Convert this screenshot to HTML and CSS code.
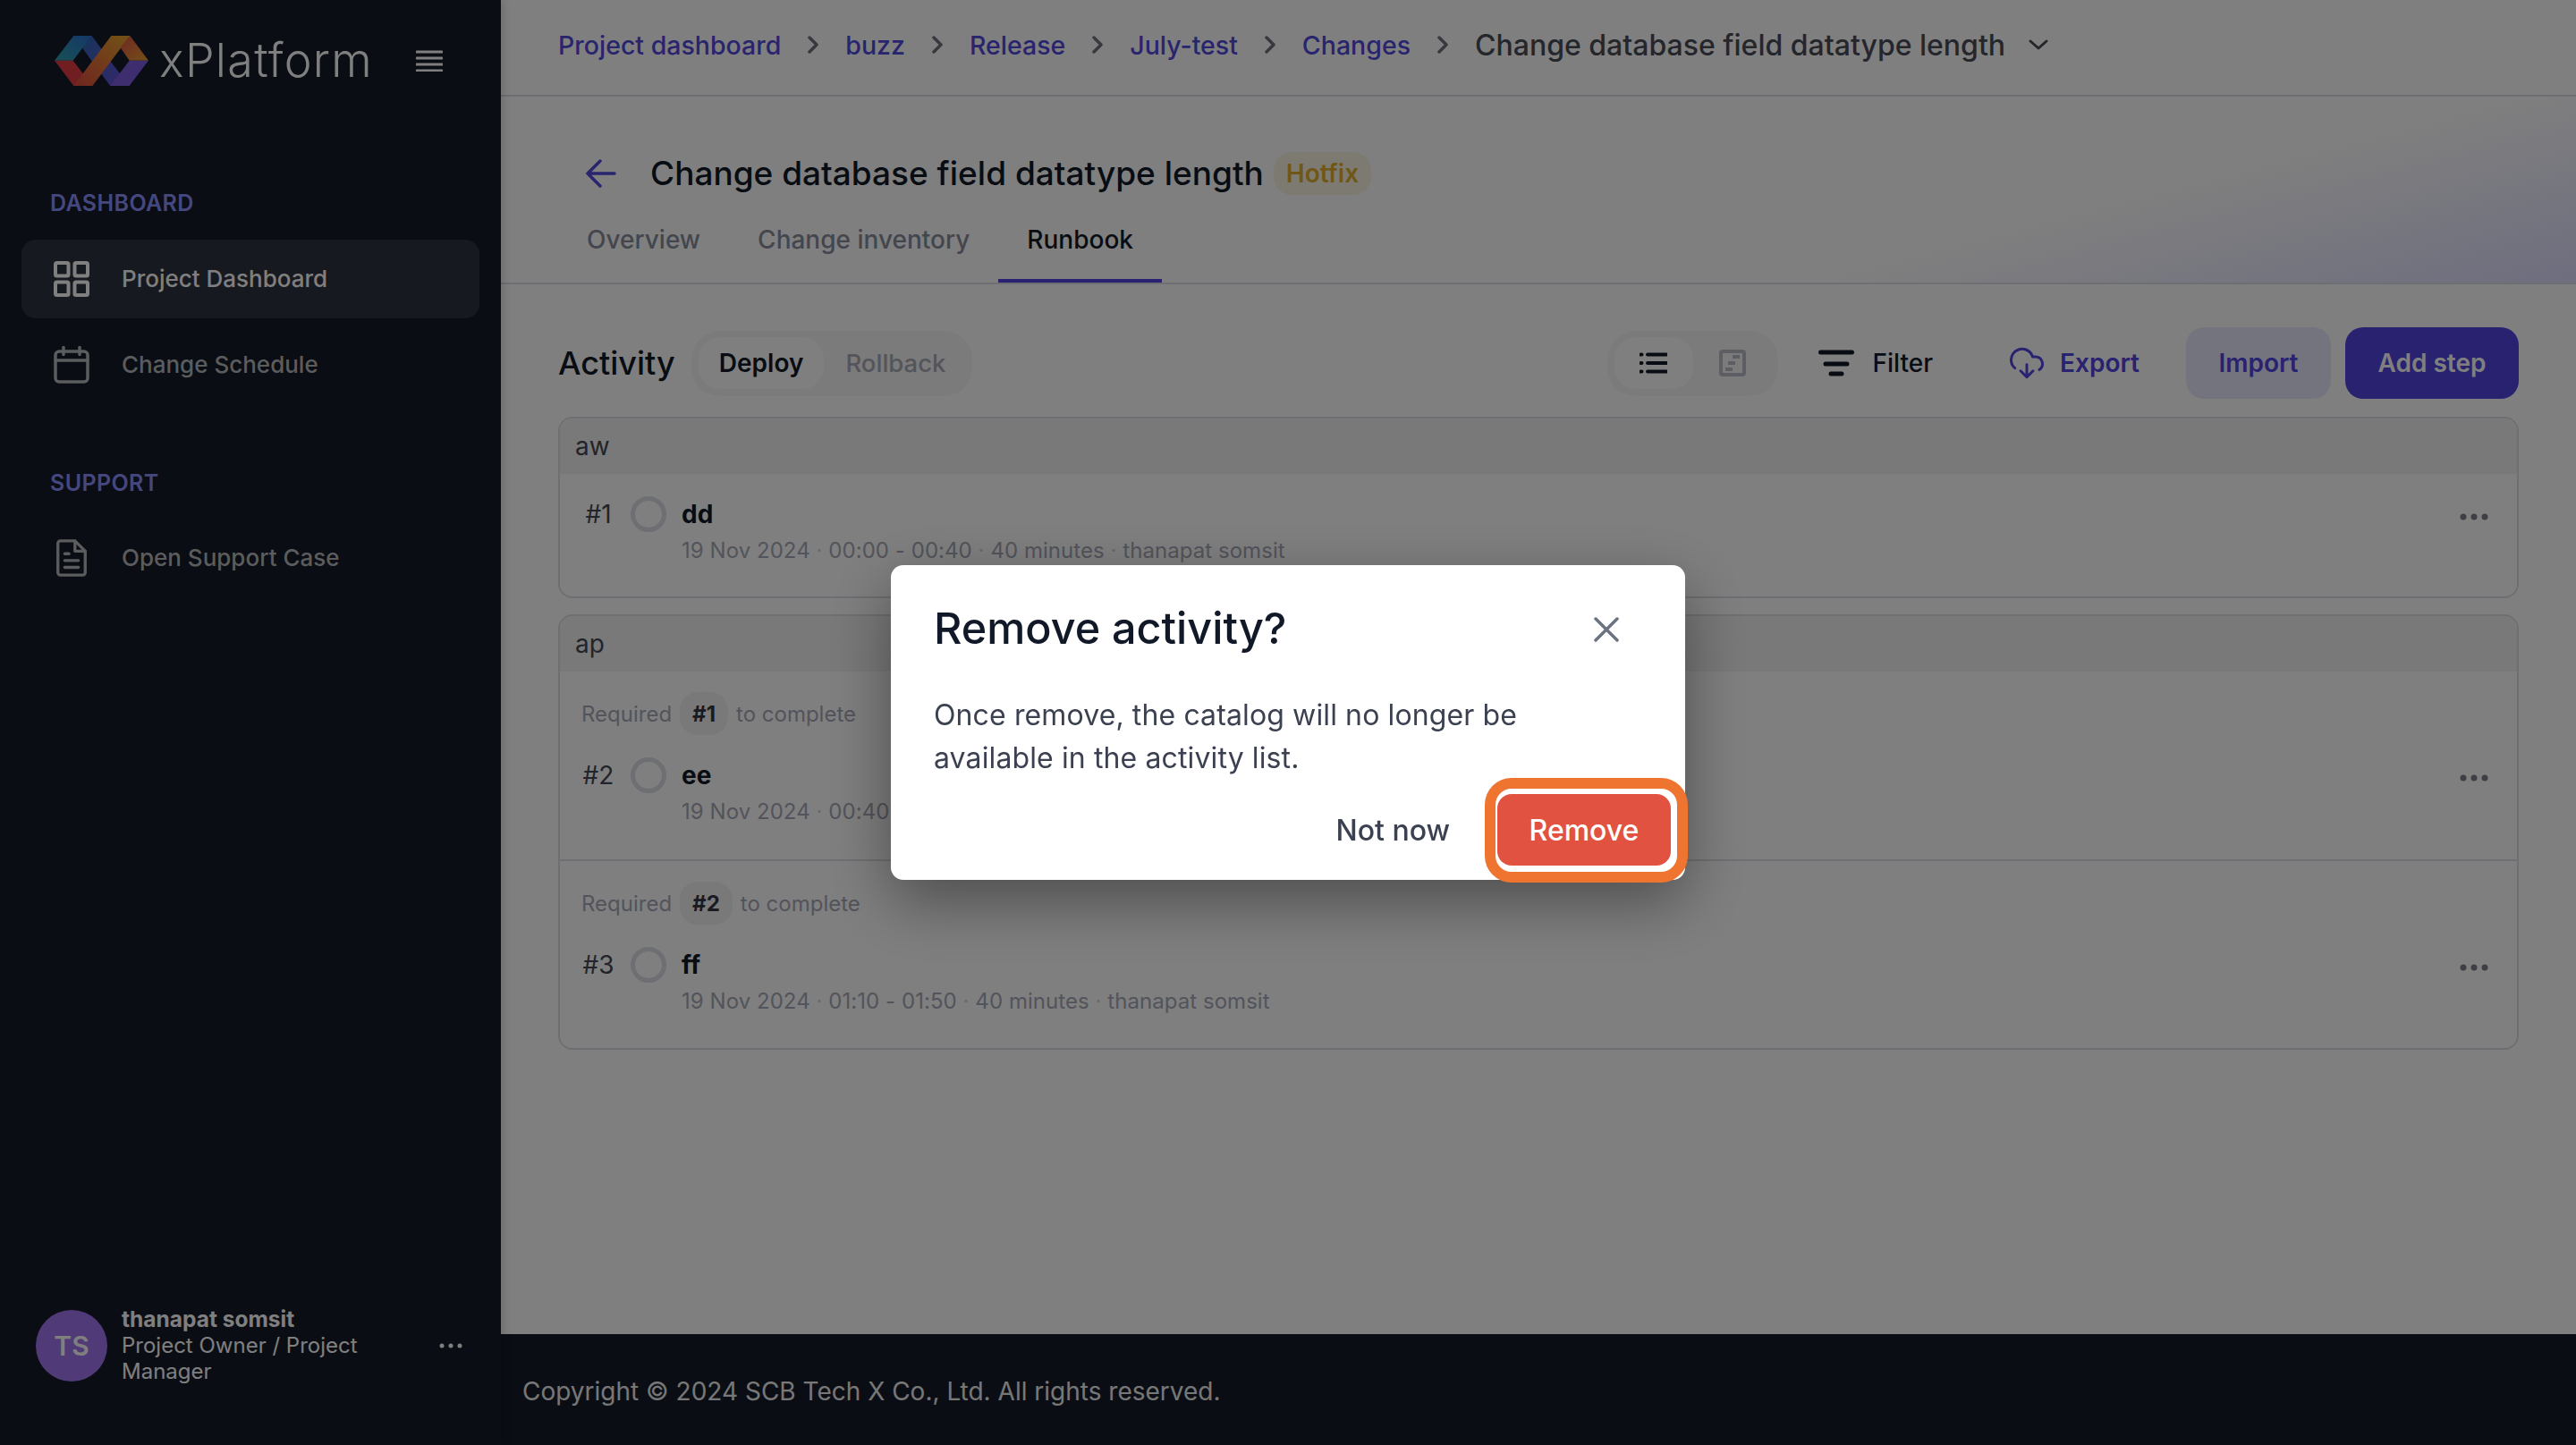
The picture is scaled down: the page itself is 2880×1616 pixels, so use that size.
FILE: index.html
```html
<!DOCTYPE html>
<html lang="en">
<head>
<meta charset="utf-8">
<title>Runbook</title>
<link rel="stylesheet" href="styles.css">
</head>
<body>
<div class="app">
  <aside class="sidebar">
    <div class="brand">
      <svg class="logo" viewBox="159 120 275 168" preserveAspectRatio="none">
        <defs>
          <linearGradient id="lb" x1="0" y1="1" x2="1" y2="0"><stop offset="0" stop-color="#2fa3ad"/><stop offset="1" stop-color="#2b6fd0"/></linearGradient>
          <linearGradient id="lm" x1="0" y1="0" x2="1" y2="1"><stop offset="0" stop-color="#2f69b8"/><stop offset="1" stop-color="#6a4fd8"/></linearGradient>
          <linearGradient id="lc" x1="1" y1="0" x2="0" y2="1"><stop offset="0" stop-color="#e6a52c"/><stop offset="1" stop-color="#e04a40"/></linearGradient>
          <linearGradient id="lg" x1="0" y1="0" x2="1" y2="1"><stop offset="0" stop-color="#e0504a"/><stop offset="1" stop-color="#e6a02c"/></linearGradient>
        </defs>
        <polygon points="268,120 322,205 378,288 322,288 268,205 240,160" fill="url(#lm)"/>
        <polygon points="159,203 215,120 268,120 213,203" fill="url(#lb)"/>
        <polygon points="159,203 213,203 270,288 215,288" fill="#e03c44"/>
        <polygon points="325,120 380,120 270,288 215,288" fill="url(#lc)"/>
        <polygon points="380,120 434,203 378,203 352,160" fill="url(#lg)"/>
        <polygon points="434,203 378,203 322,288 378,288" fill="#7c5ce0"/>
      </svg>
      <span class="brand-name">xPlatform</span>
      <svg class="burger" viewBox="0 0 30 24"><path d="M1 2h28M1 9h28M1 16h28M1 23h28" stroke="#fff" stroke-width="3" stroke-linecap="round"/></svg>
    </div>
    <nav class="nav">
      <div class="nav-label">DASHBOARD</div>
      <a class="nav-item active">
        <svg class="nav-icon" viewBox="0 0 40 40" fill="none" stroke="currentColor" stroke-width="4"><rect x="2" y="2" width="14.500" height="14.500" rx="1.500"/><rect x="23.500" y="2" width="14.500" height="14.500" rx="1.500"/><rect x="2" y="23.500" width="14.500" height="14.500" rx="1.500"/><rect x="23.500" y="23.500" width="14.500" height="14.500" rx="1.500"/></svg>
        Project Dashboard
      </a>
      <a class="nav-item">
        <svg class="nav-icon" viewBox="0 0 40 42" fill="none" stroke="currentColor" stroke-width="3.500" stroke-linecap="round"><rect x="2" y="6" width="36" height="34" rx="4"/><path d="M2 16h36M11 1.500v8M29 1.500v8"/></svg>
        Change Schedule
      </a>
      <div class="nav-label second">SUPPORT</div>
      <a class="nav-item">
        <svg class="nav-icon" viewBox="0 0 40 44" fill="none" stroke="currentColor" stroke-width="3.500" stroke-linecap="round" stroke-linejoin="round"><path d="M24 2H7a3 3 0 0 0-3 3v34a3 3 0 0 0 3 3h26a3 3 0 0 0 3-3V14z"/><path d="M24 2v12h12" /><path d="M12 17h5M12 25h16M12 33h16"/></svg>
        Open Support Case
      </a>
    </nav>
    <div class="user">
      <div class="avatar">TS</div>
      <div class="user-text">
        <div class="user-name">thanapat somsit</div>
        <div class="user-role">Project Owner / Project Manager</div>
      </div>
      <svg class="user-more" viewBox="0 0 26 6"><circle cx="3" cy="3" r="2.500"/><circle cx="13" cy="3" r="2.500"/><circle cx="23" cy="3" r="2.500"/></svg>
    </div>
  </aside>

  <div class="main">
    <header class="crumbs">
      <a class="crumb">Project dashboard</a>
      <svg class="crumb-sep" viewBox="0 0 14 20"><path d="M3 2l8 8-8 8" /></svg>
      <a class="crumb">buzz</a>
      <svg class="crumb-sep" viewBox="0 0 14 20"><path d="M3 2l8 8-8 8" /></svg>
      <a class="crumb">Release</a>
      <svg class="crumb-sep" viewBox="0 0 14 20"><path d="M3 2l8 8-8 8" /></svg>
      <a class="crumb">July-test</a>
      <svg class="crumb-sep" viewBox="0 0 14 20"><path d="M3 2l8 8-8 8" /></svg>
      <a class="crumb">Changes</a>
      <svg class="crumb-sep" viewBox="0 0 14 20"><path d="M3 2l8 8-8 8" /></svg>
      <span class="crumb-current">Change database field datatype length</span>
      <svg class="crumb-down" viewBox="0 0 22 12"><path d="M2 2l9 8 9-8"/></svg>
    </header>

    <section class="page-head">
      <div class="title-row">
        <svg class="back" viewBox="0 0 34 32"><path d="M32 16H2M16 2L2 16l14 14"/></svg>
        <h1 class="title">Change database field datatype length</h1>
        <span class="badge">Hotfix</span>
      </div>
      <div class="tabs">
        <a class="tab">Overview</a>
        <a class="tab">Change inventory</a>
        <a class="tab selected">Runbook</a>
      </div>
    </section>

    <section class="content">
      <div class="toolbar">
        <h2 class="activity">Activity</h2>
        <div class="seg">
          <span class="seg-on">Deploy</span>
          <span class="seg-off">Rollback</span>
        </div>
        <div class="toolbar-right">
          <div class="seg seg-icons">
            <span class="seg-icon-on">
              <svg class="i-list" viewBox="0 0 31 24"><path d="M1.500 2.500h1M9 2.500h21M1.500 12h1M9 12h21M1.500 21.500h1M9 21.500h21"/></svg>
            </span>
            <svg class="i-gantt" viewBox="0 0 30 30"><rect x="2" y="2" width="26" height="26" rx="2"/><path class="bars" d="M15 8h8M10 15h8M7 22h8"/></svg>
          </div>
          <button class="tool dark">
            <svg class="i-filter" viewBox="0 0 40 30"><path d="M2.500 3h35M8 16h24M14 27h12"/></svg>
            Filter
          </button>
          <button class="tool link">
            <svg class="i-export" viewBox="0 0 24 24"><path d="M12 13v8l-4-4M12 21l4-4M4.393 15.269A7 7 0 1 1 15.710 8h1.790a4.500 4.500 0 0 1 2.436 8.284"/></svg>
            Export
          </button>
          <button class="btn btn-soft">Import</button>
          <button class="btn btn-primary">Add step</button>
        </div>
      </div>

      <div class="card card-one">
        <div class="card-head">aw</div>
        <div class="step step-first">
          <div class="step-grid">
            <span class="num">#1</span>
            <span class="circle"></span>
            <span class="step-name">dd</span>
            <svg class="more" viewBox="0 0 32 8"><circle cx="4" cy="4" r="3.500"/><circle cx="16" cy="4" r="3.500"/><circle cx="28" cy="4" r="3.500"/></svg>
            <div class="meta">19 Nov 2024 <i>·</i> 00:00 - 00:40 <i>·</i> 40 minutes <i>·</i> thanapat somsit</div>
          </div>
        </div>
      </div>

      <div class="card">
        <div class="card-head">ap</div>
        <div class="step step-req">
          <div class="req">Required <b class="chip">#1</b> to complete</div>
          <div class="step-grid">
            <span class="num">#2</span>
            <span class="circle"></span>
            <span class="step-name">ee</span>
            <svg class="more" viewBox="0 0 32 8"><circle cx="4" cy="4" r="3.500"/><circle cx="16" cy="4" r="3.500"/><circle cx="28" cy="4" r="3.500"/></svg>
            <div class="meta">19 Nov 2024 <i>·</i> 00:40 - 01:10 <i>·</i> 30 minutes <i>·</i> thanapat somsit</div>
          </div>
        </div>
        <div class="step step-req step-last">
          <div class="req">Required <b class="chip">#2</b> to complete</div>
          <div class="step-grid">
            <span class="num">#3</span>
            <span class="circle"></span>
            <span class="step-name">ff</span>
            <svg class="more" viewBox="0 0 32 8"><circle cx="4" cy="4" r="3.500"/><circle cx="16" cy="4" r="3.500"/><circle cx="28" cy="4" r="3.500"/></svg>
            <div class="meta">19 Nov 2024 <i>·</i> 01:10 - 01:50 <i>·</i> 40 minutes <i>·</i> thanapat somsit</div>
          </div>
        </div>
      </div>
    </section>

    <footer class="footer">Copyright © 2024 SCB Tech X Co., Ltd. All rights reserved.</footer>
  </div>
</div>

<div class="overlay">
  <div class="dialog">
    <div class="dialog-head">
      <h3 class="dialog-title">Remove activity?</h3>
      <svg class="close" viewBox="0 0 28 28"><path d="M2 2l24 24M26 2L2 26"/></svg>
    </div>
    <p class="dialog-body">Once remove, the catalog will no longer be available in the activity list.</p>
    <div class="dialog-actions">
      <button class="btn-ghost">Not now</button>
      <div class="remove-wrap">
        <button class="btn-danger">Remove</button>
        <span class="ring"></span>
      </div>
    </div>
  </div>
</div>
</body>
</html>
```

FILE: styles.css
```css
* { box-sizing: border-box; }
html, body { margin: 0; height: 100%; }
body { font-family: Inter, "Noto Sans", "Liberation Sans", sans-serif; color: #111827; background: #fff; overflow: hidden; }
button { font-family: inherit; border: 0; background: none; padding: 0; }
h1, h2, h3, p { margin: 0; }

.app { display: flex; height: 100vh; }

/* Sidebar */
.sidebar { width: 560px; flex: none; background: #141a28; display: flex; flex-direction: column; box-shadow: 4px 0 8px rgba(0,0,0,.12); position: relative; z-index: 1; }
.brand { height: 136px; display: flex; align-items: center; padding-left: 61px; }
.logo { width: 105px; height: 56px; flex: none; }
.brand-name { margin-left: 12px; font-size: 52px; font-weight: 300; color: #fff; letter-spacing: 1.3px; line-height: 56px; width: 275px; }
.burger { width: 30px; height: 24px; flex: none; margin-left: 12px; }
.nav { padding: 75px 24px 0; display: flex; flex-direction: column; gap: 8px; }
.nav-label { font-size: 25px; line-height: 32px; font-weight: 600; color: #8a90ff; padding-left: 32px; margin-bottom: 17px; letter-spacing: .4px; }
.nav-label.second { margin-top: 64px; margin-bottom: 16px; }
.nav-item { height: 88px; display: flex; align-items: center; gap: 36px; padding-left: 36px; padding-bottom: 1px; border-radius: 16px; font-size: 26px; font-weight: 500; color: #b6b8bc; }
.nav-item.active { background: #2c323e; color: #fff; }
.nav-icon { width: 40px; height: 42px; flex: none; }
.user { margin-top: auto; margin-bottom: 68px; padding-left: 40px; display: flex; align-items: center; }
.avatar { width: 80px; height: 80px; border-radius: 50%; background: #a074f0; color: #fff; font-size: 30px; font-weight: 600; display: flex; align-items: center; justify-content: center; flex: none; }
.user-text { margin-left: 16px; width: 310px; font-size: 24px; line-height: 29px; color: #fff; }
.user-name { font-weight: 700; font-size: 24.500px; }
.user-more { width: 26px; height: 6px; margin-left: 45px; fill: #fff; }

/* Main column */
.main { flex: 1; min-width: 0; display: flex; flex-direction: column; }
.crumbs { height: 108px; flex: none; padding: 0 64px 6px; border-bottom: 2px solid #dcdce4; display: flex; align-items: center; font-size: 28.500px; font-weight: 500; }
.crumb { color: #5348dc; white-space: nowrap; }
.crumb-sep { width: 14px; height: 20px; margin: 0 29px; flex: none; fill: none; stroke: #6f737e; stroke-width: 3.500; stroke-linecap: round; stroke-linejoin: round; }
.crumb-current { color: #4a4c58; white-space: nowrap; font-size: 32px; font-weight: 500; }
.crumb-down { width: 22px; height: 12px; margin-left: 26px; fill: none; stroke: #4a4c58; stroke-width: 3; stroke-linecap: round; stroke-linejoin: round; }

.page-head { flex: none; height: 210px; padding: 58px 0 0 64px; border-bottom: 2px solid #dcdce6; background: linear-gradient(165.500deg, #fff 72%, #dcdcff 100%); }
.title-row { height: 56px; display: flex; align-items: center; padding-left: 31px; }
.back { width: 34px; height: 32px; flex: none; fill: none; stroke: #5348dc; stroke-width: 3.500; stroke-linecap: round; stroke-linejoin: round; }
.title { margin-left: 38px; font-size: 37px; line-height: 56px; font-weight: 500; color: #111827; white-space: nowrap; }
.badge { margin-left: 11px; height: 48px; padding: 0 14px; border-radius: 20px; background: #fbf7e2; color: #e0ae30; font-size: 28px; font-weight: 600; display: flex; align-items: center; }
.tabs { display: flex; }
.tab { padding: 26px 32px 24px; line-height: 40px; font-size: 28px; font-weight: 500; color: #888c9c; border-bottom: 4px solid transparent; white-space: nowrap; }
.tab.selected { color: #111827; border-bottom-color: #5044e0; }

/* Content */
.content { flex: 1; padding: 48px 64px 0; min-height: 0; }
.toolbar { height: 80px; display: flex; align-items: center; margin-bottom: 20px; }
.activity { font-size: 36px; font-weight: 500; color: #111827; line-height: 48px; }
.seg { height: 73px; margin-left: 18px; padding: 0 8px; border-radius: 32px; background: #f6f6f6; display: flex; align-items: center; font-size: 28px; font-weight: 500; }
.seg-on { height: 58px; padding: 0 23px; border-radius: 24px; background: #fff; color: #111827; font-weight: 600; display: flex; align-items: center; }
.seg-off { padding: 0 22px 0 24px; color: #a8aab6; font-size: 27.500px; }
.toolbar-right { margin-left: auto; display: flex; align-items: center; }
.seg-icons { margin-left: 0; width: 191px; padding: 0 8px; }
.seg-icon-on { width: 88px; height: 58px; background: #fff; border-radius: 24px; display: flex; align-items: center; justify-content: center; flex: none; }
.i-list { width: 31px; height: 24px; fill: none; stroke: #111827; stroke-width: 4; stroke-linecap: round; }
.i-gantt { width: 30px; height: 30px; margin-left: 29px; fill: none; stroke: #b8bcc8; stroke-width: 4; }
.i-gantt .bars { stroke: #b8bcc8; stroke-width: 4; }
.tool { display: flex; align-items: center; font-size: 28px; font-weight: 500; white-space: nowrap; }
.tool.dark { color: #111827; margin-left: 45px; gap: 21px; }
.tool.link { color: #5044e0; margin-left: 84px; gap: 16px; margin-right: 52px; font-weight: 600; }
.i-filter { width: 40px; height: 30px; fill: none; stroke: #111827; stroke-width: 5; stroke-linecap: round; }
.i-export { width: 42px; height: 42px; fill: none; stroke: #5044e0; stroke-width: 1.700; stroke-linecap: round; stroke-linejoin: round; }
.btn { height: 80px; border-radius: 20px; font-size: 28px; font-weight: 600; }
.btn-soft { width: 162px; background: #e8e9fc; color: #5044e0; }
.btn-primary { width: 194px; margin-left: 16px; background: #5044e0; color: #fff; }

.card { border: 2px solid #dedee6; border-radius: 16px; margin-bottom: 18px; overflow: hidden; }
.card-one { height: 203px; }
.card-head { height: 62px; background: #f3f3f3; padding-left: 17px; font-size: 28px; line-height: 62px; color: #444854; }
.step { padding: 0 32px 0 24px; }
.step-first { padding-top: 25px; }
.step-req { padding-top: 23px; height: 212px; border-bottom: 2px solid #dedee6; }
.step-last { height: 209px; padding-top: 23px; border-bottom: 0; }
.step-grid { display: grid; grid-template-columns: 38px 40px 1fr auto; column-gap: 17px; align-items: center; }
.req + .step-grid { margin-top: 25px; }
.num { font-size: 28px; color: #444854; text-align: center; white-space: nowrap; }
.circle { width: 40px; height: 40px; border: 5px solid #dcdee4; border-radius: 50%; }
.step-name { font-size: 28px; font-weight: 700; color: #111827; line-height: 40px; }
.more { width: 32px; height: 8px; fill: #7d7f88; margin-top: 6px; }
.meta { grid-column: 3 / 5; margin-top: 3px; font-size: 24px; letter-spacing: .05px; line-height: 36px; color: #a6a8b6; }
.meta i { font-style: normal; color: #d0d2da; }
.req { display: flex; align-items: center; height: 48px; font-size: 24px; color: #a6a8b6; }
.chip { height: 48px; margin: 0 9px; padding: 0 14px; background: #f2f2f2; border-radius: 20px; color: #333642; font-weight: 700; display: flex; align-items: center; }

.footer { height: 124px; flex: none; background: #141a28; color: #eee; padding: 4px 0 0 24px; display: flex; align-items: center; font-size: 28px; }

/* Modal */
.overlay { position: fixed; inset: 0; z-index: 10; background: rgba(0,0,0,.5); display: flex; align-items: center; justify-content: center; }
.dialog { width: 888px; height: 352px; padding: 41px 16px 15px 48px; background: #fff; border-radius: 14px; box-shadow: 0 24px 70px rgba(0,0,0,.4); }
.dialog-head { height: 60px; display: flex; align-items: center; justify-content: space-between; padding-right: 58px; }
.dialog-title { font-size: 48.500px; line-height: 60px; font-weight: 500; color: #111827; white-space: nowrap; }
.close { width: 28px; height: 28px; margin-top: 2px; fill: none; stroke: #6b7280; stroke-width: 3.500; stroke-linecap: round; }
.dialog-body { margin-top: 43px; width: 760px; font-size: 32px; letter-spacing: .12px; line-height: 48px; color: #3b4150; }
.dialog-actions { margin-top: 16px; display: flex; justify-content: flex-end; align-items: center; gap: 21px; }
.btn-ghost { padding: 0 32px; height: 80px; font-size: 32px; font-weight: 500; color: #3b4150; }
.remove-wrap { position: relative; }
.btn-danger { display: block; width: 194px; height: 80px; background: #e25241; color: #fff; border-radius: 16px; font-size: 32px; font-weight: 500; }
.ring { position: absolute; top: -18px; right: -19px; bottom: -19px; left: -14px; border: 12px solid #ee7430; border-radius: 30px; pointer-events: none; }
```
